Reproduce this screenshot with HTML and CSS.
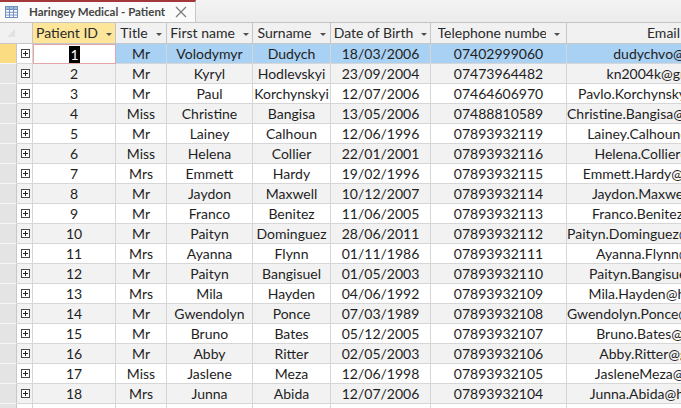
FILE: index.html
```html
<!DOCTYPE html>
<html lang="en">
<head>
    <meta charset="UTF-8">
    <meta name="viewport" content="width=device-width, initial-scale=1.0">
    <title>Haringey Medical - Patient</title>
    <link rel="stylesheet" href="styles.css">
</head>
<body>
    <div class="tabbar">
        <div class="tab">
            <svg class="tab-icon" width="13" height="12" viewBox="0 0 13 12">
                <rect x="0.5" y="0.5" width="12" height="11" fill="#fff" stroke="#6f8fbf"/>
                <rect x="1" y="1" width="11" height="2.5" fill="#9fb8dc"/>
                <path d="M1 3.5H12M1 6.3H12M1 9H12M4.5 1V11.5M8.5 1V11.5" stroke="#6f8fbf" stroke-width="1"/>
            </svg>
            <span class="tab-title">Haringey Medical - Patient</span>
            <svg class="tab-close" width="12" height="12" viewBox="0 0 12 12">
                <path d="M1 1L11 11M11 1L1 11" stroke="#7a7a7a" stroke-width="1.2"/>
            </svg>
        </div>
    </div>

    <div class="sheet">
        <div class="row head">
            <div class="cell sel corner">
                <svg width="8" height="8" viewBox="0 0 8 8"><path d="M0 8L8 0V8Z" fill="#e2e2e2"/></svg>
            </div>
            <div class="cell exp"></div>
            <div class="cell hcol active"><span class="lbl">Patient ID</span><span class="arrow"></span></div>
            <div class="cell hcol"><span class="lbl">Title</span><span class="arrow"></span></div>
            <div class="cell hcol"><span class="lbl">First name</span><span class="arrow"></span></div>
            <div class="cell hcol"><span class="lbl">Surname</span><span class="arrow"></span></div>
            <div class="cell hcol"><span class="lbl">Date of Birth</span><span class="arrow"></span></div>
            <div class="cell hcol"><span class="lbl clip">Telephone number</span><span class="arrow"></span></div>
            <div class="cell hcol"><span class="lbl">Email</span><span class="arrow"></span></div>
        </div>
        <div id="rows"></div>
    </div>

    <script>
        const patients = [
            [1, "Mr", "Volodymyr", "Dudych", "18/03/2006", "07402999060", "dudychvo@ukr.net"],
            [2, "Mr", "Kyryl", "Hodlevskyi", "23/09/2004", "07473964482", "kn2004k@gmail.com"],
            [3, "Mr", "Paul", "Korchynskyi", "12/07/2006", "07464606970", "Pavlo.Korchynskyi@gmail.com"],
            [4, "Miss", "Christine", "Bangisa", "13/05/2006", "07488810589", "Christine.Bangisa@btinternet.com"],
            [5, "Mr", "Lainey", "Calhoun", "12/06/1996", "07893932119", "Lainey.Calhoun@gmail.com"],
            [6, "Miss", "Helena", "Collier", "22/01/2001", "07893932116", "Helena.Collier@mail.com"],
            [7, "Mrs", "Emmett", "Hardy", "19/02/1996", "07893932115", "Emmett.Hardy@hotmail.com"],
            [8, "Mr", "Jaydon", "Maxwell", "10/12/2007", "07893932114", "Jaydon.Maxwell@aol.com"],
            [9, "Mr", "Franco", "Benitez", "11/06/2005", "07893932113", "Franco.Benitez@mail.com"],
            [10, "Mr", "Paityn", "Dominguez", "28/06/2011", "07893932112", "Paityn.Dominguez@btinternet.co.uk"],
            [11, "Mrs", "Ayanna", "Flynn", "01/11/1986", "07893932111", "Ayanna.Flynn@mail.com"],
            [12, "Mr", "Paityn", "Bangisuel", "01/05/2003", "07893932110", "Paityn.Bangisuel@live.com"],
            [13, "Mrs", "Mila", "Hayden", "04/06/1992", "07893932109", "Mila.Hayden@hotmail.com"],
            [14, "Mr", "Gwendolyn", "Ponce", "07/03/1989", "07893932108", "Gwendolyn.Ponce@btinternet.com"],
            [15, "Mr", "Bruno", "Bates", "05/12/2005", "07893932107", "Bruno.Bates@gmail.com"],
            [16, "Mr", "Abby", "Ritter", "02/05/2003", "07893932106", "Abby.Ritter@gmail.com"],
            [17, "Miss", "Jaslene", "Meza", "12/06/1998", "07893932105", "JasleneMeza@gmail.com"],
            [18, "Mrs", "Junna", "Abida", "12/07/2006", "07893932104", "Junna.Abida@hotmail.com"],
            [19, "Mr", "Tomas", "Reyes", "03/03/1999", "07893932103", "Tomas.Reyes@hotmail.com"]
        ];

        function displayRows() {
            const rows = document.getElementById('rows');
            patients.forEach((p, i) => {
                const row = document.createElement('div');
                row.classList.add('row');
                if (i === 0) row.classList.add('current');
                else if (i % 2 === 1) row.classList.add('alt');
                const id = i === 0 ? `<span class="hl">${p[0]}</span>` : p[0];
                row.innerHTML = `
                    <div class="cell sel"></div>
                    <div class="cell exp"><span class="plus"></span></div>
                    <div class="cell ${i === 0 ? 'focus' : ''}">${id}</div>
                    <div class="cell">${p[1]}</div>
                    <div class="cell">${p[2]}</div>
                    <div class="cell">${p[3]}</div>
                    <div class="cell">${p[4]}</div>
                    <div class="cell">${p[5]}</div>
                    <div class="cell">${p[6]}</div>
                `;
                rows.appendChild(row);
            });
        }

        displayRows();
    </script>
</body>
</html>
```

FILE: styles.css
```css
body {
    margin: 0;
    font-family: Lato, "Open Sans", sans-serif;
    font-size: 14px;
    color: #1e1e1e;
    background: #fff;
    overflow: hidden;
}

.tabbar {
    height: 22px;
    background: linear-gradient(#f3f3f3, #ececec);
    border-bottom: 1px solid #c4c4c4;
}

.tab {
    width: 196px;
    height: 22px;
    box-sizing: border-box;
    background: #fafafa;
    border-top: 2px solid #a4373a;
    border-right: 1px solid #c8c8c8;
    display: flex;
    align-items: center;
    padding-left: 5px;
}

.tab-icon {
    flex: none;
}

.tab-title {
    flex: none;
    white-space: nowrap;
    font-size: 11.5px;
    font-weight: 700;
    color: #454545;
    margin-left: 11px;
    margin-top: -1px;
}

.tab-close {
    flex: none;
    margin-left: 10px;
    margin-top: -1px;
}

.sheet {
    width: 681px;
    overflow: hidden;
}

.row {
    display: grid;
    grid-template-columns: 17px 16px 83px 51px 86px 78px 100px 136px 208px;
    height: 20px;
    width: 775px;
}

.row.alt {
    background: #f2f2f2;
}

.row.current {
    background: #a9d1f3;
}

.cell {
    box-sizing: border-box;
    border-right: 1px solid #d6d6d6;
    border-bottom: 1px solid #d6d6d6;
    text-align: center;
    line-height: 19px;
    white-space: nowrap;
    overflow: hidden;
}

.head {
    height: 21px;
    background: #f1f1f1;
}

.head .cell {
    border-color: #c6c6c6;
    line-height: 20px;
}

.hcol {
    display: flex;
    justify-content: center;
    align-items: center;
    color: #2a2a2a;
}

.hcol.active {
    background: #fde599;
}

.lbl {
    overflow: hidden;
    white-space: nowrap;
}

.lbl.clip {
    max-width: 108px;
}

.arrow {
    flex: none;
    margin-left: 8px;
    margin-top: 2px;
    border-left: 3px solid transparent;
    border-right: 3px solid transparent;
    border-top: 3px solid #505050;
}

.corner {
    display: flex;
    align-items: flex-end;
    justify-content: flex-end;
    padding: 0 2px 6px 0;
}

.head .exp {
    border-right-color: #c6c6c6;
}

.sel {
    background: #e4e4e4;
    border-right-color: #c8c8c8;
    border-bottom-color: #f6f6f6;
}

.current .sel {
    background: #fcdc82;
}

.head .sel {
    background: #f1f1f1;
    border-right: none;
    border-bottom-color: #c6c6c6;
}

.head .exp {
    background: #f1f1f1;
}

.exp {
    display: flex;
    align-items: center;
    justify-content: center;
}

.current .exp {
    background: #fff;
}

.plus {
    width: 9px;
    height: 9px;
    box-sizing: border-box;
    border: 1px solid #4a4a4a;
    background: #fff;
    position: relative;
    margin-left: 1px;
}

.plus::before,
.plus::after {
    content: "";
    position: absolute;
    background: #222;
}

.plus::before {
    left: 1px;
    top: 3px;
    width: 5px;
    height: 1px;
}

.plus::after {
    left: 3px;
    top: 1px;
    width: 1px;
    height: 5px;
}

.focus {
    background: #fff;
    border: 1px solid #e3a7a9;
}

.hl {
    background: #000;
    color: #fff;
    padding: 0 1px;
}
```
